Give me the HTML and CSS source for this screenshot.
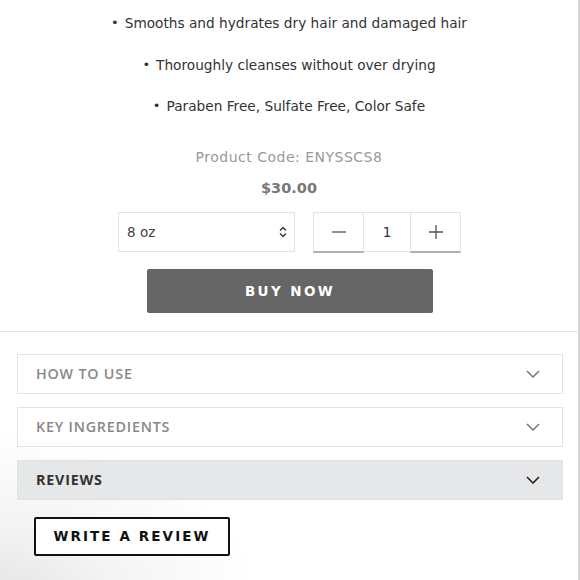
FILE: index.html
```html
<!DOCTYPE html>
<html>
<head>
<meta charset="utf-8">
<link rel="stylesheet" href="styles.css">
</head>
<body>
<div class="page">
  <section class="product">
    <ul class="features">
      <li>Smooths and hydrates dry hair and damaged hair</li>
      <li>Thoroughly cleanses without over drying</li>
      <li>Paraben Free, Sulfate Free, Color Safe</li>
    </ul>
    <p class="code">Product Code: ENYSSCS8</p>
    <p class="price">$30.00</p>
    <div class="options">
      <div class="select">
        <span>8 oz</span>
        <svg class="updown" width="10" height="12" viewBox="0 0 10 12"><path d="M2 4.5 L5 1.5 L8 4.5 M2 7.5 L5 10.5 L8 7.5" fill="none" stroke="#333" stroke-width="1.4"/></svg>
      </div>
      <div class="qty">
        <div class="qbtn"><svg width="16" height="16" viewBox="0 0 16 16"><path d="M1 8 H15" stroke="#555" stroke-width="1.3"/></svg></div>
        <div class="qval">1</div>
        <div class="qbtn"><svg width="16" height="16" viewBox="0 0 16 16"><path d="M1 8 H15 M8 1 V15" stroke="#555" stroke-width="1.3"/></svg></div>
      </div>
    </div>
    <div class="buy">BUY NOW</div>
  </section>
  <section class="details">
    <div class="acc"><span>HOW TO USE</span><svg class="chev" width="14" height="8" viewBox="0 0 14 8"><path d="M1 1 L7 7 L13 1" fill="none" stroke="#777" stroke-width="1.5"/></svg></div>
    <div class="acc"><span>KEY INGREDIENTS</span><svg class="chev" width="14" height="8" viewBox="0 0 14 8"><path d="M1 1 L7 7 L13 1" fill="none" stroke="#777" stroke-width="1.5"/></svg></div>
    <div class="acc active"><span>REVIEWS</span><svg class="chev" width="14" height="8" viewBox="0 0 14 8"><path d="M1 1 L7 7 L13 1" fill="none" stroke="#222" stroke-width="1.6"/></svg></div>
    <div class="write">WRITE A REVIEW</div>
  </section>
</div>
</body>
</html>
```

FILE: styles.css
```css
html, body {
  margin: 0;
  padding: 0;
  background: #fff;
}
body {
  font-family: "DejaVu Sans", sans-serif;
  color: #333;
}
.page {
  width: 578px;
  height: 580px;
  border-right: 2px solid #d6d6d6;
  overflow: hidden;
  background: radial-gradient(ellipse 260px 170px at 0 600px, #e4e4e4 0%, #f4f4f4 45%, rgba(255,255,255,0) 100%), #fff;
}
.product {
  border-bottom: 1px solid #e2e2e2;
  padding-bottom: 18px;
  background: #fff;
}
.features {
  list-style: none;
  margin: 0;
  padding: 14px 0 0;
  text-align: center;
  font-size: 13.7px;
  color: #333;
}
.features li {
  height: 18px;
  line-height: 18px;
  margin-bottom: 23.5px;
}
.features li::before {
  content: "•";
  font-size: 13px;
  margin-right: 6px;
  position: relative;
  top: -1px;
}
.code {
  margin: 0;
  padding-top: 9px;
  text-align: center;
  font-size: 14px;
  color: #999;
  letter-spacing: 0.5px;
  line-height: 18px;
}
.price {
  margin: 12px 0 0;
  text-align: center;
  font-size: 14.5px;
  font-weight: bold;
  color: #777;
  line-height: 20px;
}
.options {
  display: flex;
  gap: 18px;
  margin: 14px 0 0 118px;
}
.select {
  border: 1px solid #e3e3e3;
  display: flex;
  align-items: center;
  justify-content: space-between;
  padding: 0 6px 0 8px;
  box-sizing: border-box;
  width: 177px;
  height: 40px;
  font-size: 13.5px;
  color: #444;
}
.qty {
  display: flex;
  height: 41px;
}
.qbtn {
  width: 51px;
  height: 41px;
  box-sizing: border-box;
  border: 1px solid #e3e3e3;
  border-bottom: 2px solid #b0b0b0;
  display: flex;
  align-items: center;
  justify-content: center;
}
.qval {
  width: 46px;
  height: 40px;
  box-sizing: border-box;
  border-top: 1px solid #e3e3e3;
  border-bottom: 1px solid #e3e3e3;
  display: flex;
  align-items: center;
  justify-content: center;
  font-size: 13.5px;
  color: #333;
}
.buy {
  margin: 16px 0 0 147px;
  width: 286px;
  height: 44px;
  background: #666;
  border-radius: 2px;
  color: #fff;
  font-weight: bold;
  font-size: 13.5px;
  letter-spacing: 2.4px;
  display: flex;
  align-items: center;
  justify-content: center;
}
.details {
  padding: 22px 0 0 17px;
  display: flex;
  flex-direction: column;
  gap: 13px;
}
.acc {
  width: 546px;
  height: 40px;
  box-sizing: border-box;
  border: 1px solid #e3e3e3;
  display: flex;
  align-items: center;
  justify-content: space-between;
  padding: 0 22px 0 18px;
  font-family: "Open Sans", sans-serif;
  font-size: 14.3px;
  font-weight: 600;
  letter-spacing: 0.8px;
  color: #888;
  background: #fff;
}
.acc.active {
  background: #e6e7e8;
  border-color: #e0e1e2;
  color: #333;
  font-weight: 700;
}
.write {
  margin: 4px 0 0 17px;
  width: 196px;
  height: 39px;
  box-sizing: border-box;
  border: 2px solid #111;
  border-radius: 2px;
  background: #fff;
  display: flex;
  align-items: center;
  justify-content: center;
  font-size: 13.5px;
  font-weight: bold;
  letter-spacing: 2.1px;
  color: #111;
}
```
